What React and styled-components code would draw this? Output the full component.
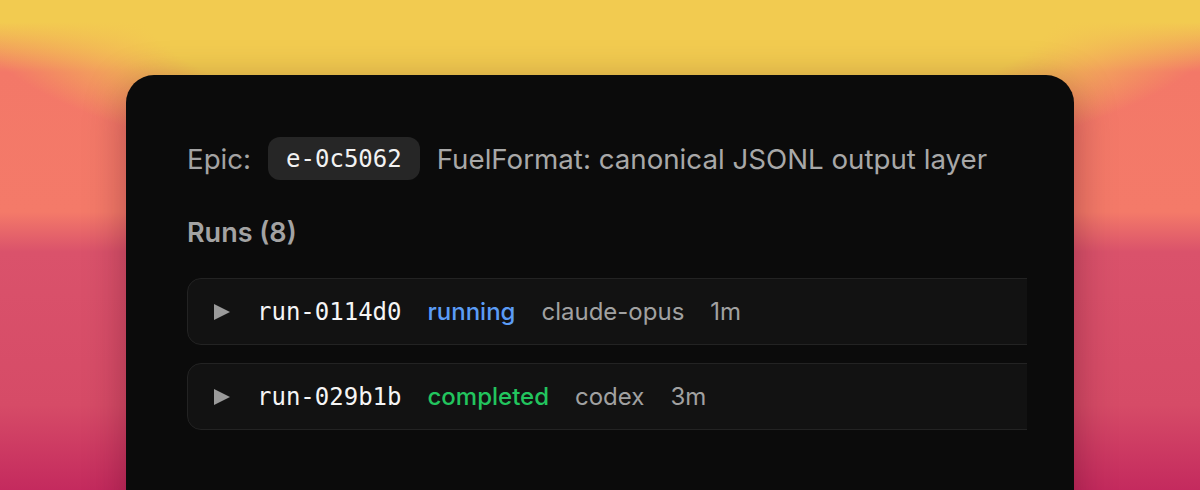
import React from "react";
import styled, { createGlobalStyle } from "styled-components";

const GlobalStyle = createGlobalStyle`
  html, body { margin: 0; padding: 0; }
  body {
    width: 1200px;
    height: 490px;
    overflow: hidden;
    font-family: Inter, "Noto Sans", sans-serif;
  }
`;

const Page = styled.div`
  width: 1200px;
  height: 490px;
  overflow: hidden;
  display: flex;
  justify-content: center;
  padding-top: 75px;
  box-sizing: border-box;
  background:
    radial-gradient(ellipse 640px 190px at 50% 0%, #f2cb50 72%, rgba(242, 203, 80, 0) 100%),
    linear-gradient(
      180deg,
      #f2cb50 0px,
      #f2cb50 22px,
      #f37868 72px,
      #f47a69 212px,
      #da526b 252px,
      #d64b67 405px,
      #c42a5e 490px
    );
`;

const Card = styled.div`
  width: 948px;
  min-height: 460px;
  flex-shrink: 0;
  box-sizing: border-box;
  background: #0b0b0b;
  border-radius: 28px;
  padding: 62px 47px 0 61px;
  box-shadow: 0 10px 40px rgba(60, 0, 20, 0.35);
  display: flex;
  flex-direction: column;
`;

const EpicLine = styled.div`
  display: flex;
  align-items: center;
  gap: 17px;
  height: 43px;
  font-size: 27.7px;
  color: #a3a3a3;
`;

const Label = styled.span``;

const Chip = styled.span`
  display: inline-flex;
  align-items: center;
  height: 43px;
  padding: 0 18px;
  border-radius: 12px;
  background: #262626;
  color: #f2f2f2;
  font-family: "DejaVu Sans Mono", "Liberation Mono", monospace;
  font-size: 24px;
`;

const Title = styled.span`
  color: #a8a8a8;
`;

const SectionTitle = styled.h2`
  margin: 38px 0 30px;
  font-size: 27px;
  line-height: 30px;
  font-weight: 600;
  color: #a3a3a3;
`;

const RunList = styled.div`
  display: flex;
  flex-direction: column;
  gap: 18px;
  overflow: hidden;
`;

const Row = styled.div`
  width: calc(100% + 40px);
  height: 67px;
  box-sizing: border-box;
  display: flex;
  align-items: center;
  padding: 0 26px;
  background: #121212;
  border: 1px solid #232323;
  border-radius: 14px;
  gap: 26px;
`;

const Caret = styled.svg`
  width: 17px;
  height: 16px;
  margin-left: -1px;
  margin-right: 1px;
  flex-shrink: 0;
`;

const RunId = styled.span`
  font-family: "DejaVu Sans Mono", "Liberation Mono", monospace;
  font-size: 24px;
  color: #f5f5f5;
`;

const Status = styled.span`
  font-size: 24px;
  font-weight: 500;
  color: ${(p) => (p.$state === "running" ? "#5b9cf6" : "#22c55e")};
`;

const Meta = styled.span`
  font-size: 24px;
  color: #a1a1a1;
`;

const runs = [
  { id: "run-0114d0", state: "running", model: "claude-opus", time: "1m" },
  { id: "run-029b1b", state: "completed", model: "codex", time: "3m" },
];

export default function App() {
  return (
    <>
      <GlobalStyle />
      <Page>
        <Card>
          <EpicLine>
            <Label>Epic:</Label>
            <Chip>e-0c5062</Chip>
            <Title>FuelFormat: canonical JSONL output layer</Title>
          </EpicLine>
          <SectionTitle>Runs (8)</SectionTitle>
          <RunList>
            {runs.map((r) => (
              <Row key={r.id}>
                <Caret viewBox="0 0 17 16">
                  <polygon points="1,0 17,8 1,16" fill="#9a9a9a" />
                </Caret>
                <RunId>{r.id}</RunId>
                <Status $state={r.state}>{r.state}</Status>
                <Meta>{r.model}</Meta>
                <Meta>{r.time}</Meta>
              </Row>
            ))}
          </RunList>
        </Card>
      </Page>
    </>
  );
}
